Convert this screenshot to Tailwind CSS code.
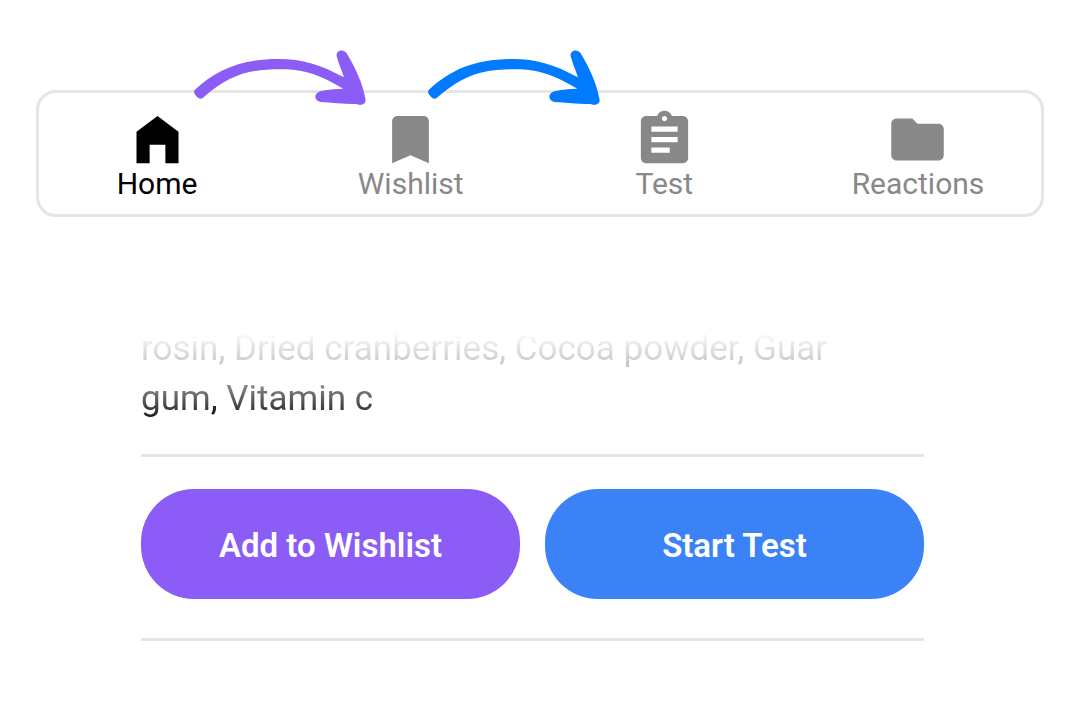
<!DOCTYPE html>
<html lang="en">
<head>
<meta charset="utf-8">
<meta name="viewport" content="width=device-width, initial-scale=1">
<title>Wishlist and test</title>
<script src="https://cdn.jsdelivr.net/npm/@tailwindcss/browser@4"></script>
</head>
<body class="bg-white font-['Roboto',sans-serif]">
<main class="pt-[90px]">
  <div class="relative px-9">
    <nav aria-label="Main" class="flex justify-between rounded-[20px] border-3 border-[#e5e5e5] pl-[52px] pr-[57px] pt-[15px] pb-[14px] text-[30px] leading-8 text-[#888888]">
      <a href="#home" aria-current="page" class="flex w-[132px] flex-col items-center text-black">
        <svg class="-mb-[3px] size-[63px]" viewBox="0 0 24 24" fill="currentColor" aria-hidden="true"><path d="M4 21V9l8-6 8 6v12h-5v-7H9v7z"/></svg>
        Home
      </a>
      <a href="#wishlist" class="flex w-[132px] flex-col items-center">
        <svg class="-mb-[3px] size-[63px]" viewBox="0 0 24 24" fill="currentColor" aria-hidden="true"><path d="M17 3H7c-1.100 0-2 .9-2 2v16l7-3 7 3V5c0-1.100-.9-2-2-2z"/></svg>
        Wishlist
      </a>
      <a href="#test" class="flex w-[132px] flex-col items-center">
        <svg class="-mb-[3px] size-[63px]" viewBox="0 0 24 24" fill="currentColor" aria-hidden="true"><path d="M19 3h-4.180C14.400 1.840 13.300 1 12 1c-1.300 0-2.400.84-2.820 2H5c-1.100 0-2 .9-2 2v14c0 1.100.9 2 2 2h14c1.100 0 2-.9 2-2V5c0-1.100-.9-2-2-2zm-7 0c.55 0 1 .45 1 1s-.45 1-1 1-1-.45-1-1 .45-1 1-1zm2 14H7v-2h7v2zm3-4H7v-2h10v2zm0-4H7V7h10v2z"/></svg>
        Test
      </a>
      <a href="#reactions" class="flex w-[132px] flex-col items-center">
        <svg class="-mb-[3px] size-[63px]" viewBox="0 0 24 24" fill="currentColor" aria-hidden="true"><path d="M10 4H4c-1.100 0-1.990.9-1.990 2L2 18c0 1.100.9 2 2 2h16c1.100 0 2-.9 2-2V8c0-1.100-.9-2-2-2h-8l-2-2z"/></svg>
        Reactions
      </a>
    </nav>
    <svg class="absolute -top-[42px] left-[190px] h-[60px] w-[180px] text-[#8b5cf6]" viewBox="510 24 540 180" fill="currentColor" aria-hidden="true">
      <path id="arrow" d="M524 150C590 88 665 57 775 57C850 57 900 74 972 112C964 90 956 70 950 49C947 31 970 25 980 40C1006 83 1028 130 1037 180C1037 193 1023 198 1010 192C975 193 938 188 902 186C881 183 881 159 901 154C922 148 946 147 970 146C905 108 855 89 800 88C690 86 635 100 549 173Q541 180 531 171Q518 159 524 150Z"/>
    </svg>
    <svg class="absolute -top-[42px] left-[424px] h-[60px] w-[180px] text-[#007aff]" viewBox="510 24 540 180" fill="currentColor" aria-hidden="true">
      <use href="#arrow"/>
    </svg>
  </div>

  <section class="pl-[141px] pr-[156px] pt-[107px]">
    <p class="pr-10 pb-[30px] text-[35px] leading-[50px] text-[#1c1b1f] [mask-image:linear-gradient(to_bottom,transparent_8px,rgba(0,0,0,0.12)_23px,rgba(0,0,0,0.24)_40px,rgba(0,0,0,0.52)_62px,rgba(0,0,0,0.88)_86px,black_92px)]">rosin, Dried cranberries, Cocoa powder, Guar gum<span class="text-black">,</span> Vitamin c</p>
    <div class="grid grid-cols-2 gap-[25px] border-y-3 border-[#e5e5e5] pt-8 pb-[39px] text-[33px] font-semibold leading-[46px] text-white">
      <button type="button" class="rounded-[53px] bg-[#8b5cf6] pt-[34px] pb-[30px]">Add to Wishlist</button>
      <button type="button" class="rounded-[53px] bg-[#3b82f6] pt-[34px] pb-[30px]">Start Test</button>
    </div>
  </section>
</main>
</body>
</html>
